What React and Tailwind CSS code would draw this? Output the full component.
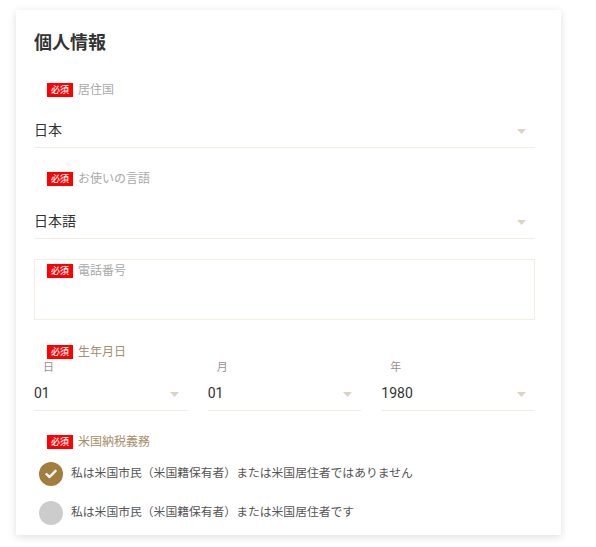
import React from "react";

const FONT = { fontFamily: "Roboto, 'Noto Sans CJK JP', sans-serif" };

function Badge() {
  return (
    <span className="inline-flex h-[14px] w-[26px] items-center justify-center bg-[#ff0000] text-[9px] leading-none font-medium text-white">
      必須
    </span>
  );
}

function Label({ children, brown }) {
  return (
    <div className="ml-[13px] flex h-[14px] items-center gap-[5px]">
      <Badge />
      <span className={`text-[12px] leading-none ${brown ? "text-[#a58f6c]" : "text-[#a9a9a9]"}`}>{children}</span>
    </div>
  );
}

function Arrow() {
  return (
    <svg width="9" height="5" viewBox="0 0 9 5" className="mt-[3px]">
      <path d="M0 0 L9 0 L4.5 5 Z" fill="#ddd3c4" />
    </svg>
  );
}

function Select({ value, height = "h-[36px]" }) {
  return (
    <div className={`flex ${height} items-center justify-between border-b border-[#f3ece2] pr-[9px]`}>
      <span className="text-[14px] leading-none text-[#333]">{value}</span>
      <Arrow />
    </div>
  );
}

function Radio({ checked, children }) {
  return (
    <div className="ml-[5px] flex items-center gap-[8px]">
      {checked ? (
        <span className="flex h-[24px] w-[24px] items-center justify-center rounded-full bg-[#a27d3e]">
          <svg width="12" height="10" viewBox="0 0 12 10">
            <path d="M1.5 5.2 L4.6 8 L10.5 1.8" stroke="#fff" strokeWidth="2.4" fill="none" strokeLinecap="round" strokeLinejoin="round" />
          </svg>
        </span>
      ) : (
        <span className="h-[24px] w-[24px] rounded-full bg-[#cccccc]" />
      )}
      <span className="text-[11.8px] leading-none text-[#555]">{children}</span>
    </div>
  );
}

export default function App() {
  return (
    <div className="min-h-[547px] w-[596px] bg-white pt-[10px] pl-[16px]" style={FONT}>
      <div className="flex w-[545px] flex-col bg-white pt-[21px] pr-[26px] pb-[10px] pl-[18px] shadow-[0_2px_8px_rgba(0,0,0,0.13)]">
        <h1 className="h-[24px] text-[18px] leading-[24px] font-bold text-[#333]">個人情報</h1>

        <div className="mt-[28px]">
          <Label>居住国</Label>
        </div>
        <div className="mt-[16px]">
          <Select value="日本" height="h-[35px]" />
        </div>

        <div className="mt-[24px]">
          <Label>お使いの言語</Label>
        </div>
        <div className="mt-[17px]">
          <Select value="日本語" />
        </div>

        <div className="mt-[20px] h-[61px] border border-[#f5ede2] pt-[4px]">
          <div className="-ml-px">
            <Label>電話番号</Label>
          </div>
        </div>

        <div className="mt-[25px]">
          <Label brown>生年月日</Label>
        </div>
        <div className="grid grid-cols-3 gap-[20px]">
          {[
            ["日", "01"],
            ["月", "01"],
            ["年", "1980"],
          ].map(([l, v]) => (
            <div key={l} className="flex flex-col">
              <div className="ml-[9px] flex h-[16px] items-center text-[11px] leading-none text-[#9a8f95]">{l}</div>
              <Select value={v} height="h-[36px]" />
            </div>
          ))}
        </div>

        <div className="mt-[24px]">
          <Label brown>米国納税義務</Label>
        </div>
        <div className="mt-[13px] flex flex-col gap-[15px]">
          <Radio checked>私は米国市民（米国籍保有者）または米国居住者ではありません</Radio>
          <Radio>私は米国市民（米国籍保有者）または米国居住者です</Radio>
        </div>
      </div>
    </div>
  );
}
